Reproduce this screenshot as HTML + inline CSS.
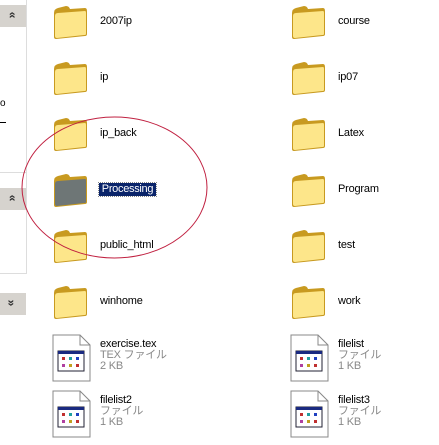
<html><head><style>
body{margin:0;width:439px;height:445px;background:#fff;position:relative;overflow:hidden;font-family:"Liberation Sans","Noto Sans CJK JP",sans-serif;font-size:10px;color:#000}
.a{position:absolute}
.btn{position:absolute;left:0;width:26px;height:22px;background:#d6d3ce}
.btn span{position:absolute;left:8px;top:4px;font-size:12px;line-height:12px;color:#333;font-weight:bold;display:block}
.lbl{position:absolute;font-size:11px;letter-spacing:-0.2px}
.g{color:#888}
</style></head><body>
<div class="a" style="left:0;top:0;width:26px;height:172px;border-right:1px solid #ddd;border-bottom:1px solid #ddd"></div>
<div class="a" style="left:0;top:173px;width:26px;height:100px;border-right:1px solid #ddd;border-bottom:1px solid #ddd"></div>
<div class="btn" style="top:5px"><span style="transform:rotate(-90deg)">»</span></div>
<div class="btn" style="top:188px"><span style="transform:rotate(-90deg)">»</span></div>
<div class="btn" style="top:293px"><span style="transform:rotate(90deg)">»</span></div>
<div class="a" style="left:0;top:98px;font-size:10px">o</div>
<div class="a" style="left:0;top:122px;width:6px;height:1px;background:#000"></div>
<svg width="0" height="0" style="position:absolute"><defs>
<symbol id="f" viewBox="0 0 36 36"><path d="M2 8 Q2 4 6 3 L14 1 Q17 1 18 4 L33 3 Q35 3 35 6 L35 29 Q35 31 33 31 L4 34 Q2 34 2 32 Z" fill="#c89a20"/><path d="M3 11 Q3 8 6 8 L33 6 Q34 6 34 8 L34 29 Q34 30 32 30 L5 33 Q3 33 3 31 Z" fill="currentColor"/></symbol>
<symbol id="d" viewBox="0 0 40 48"><path d="M1 1 L28 1 L38 11 L38 47 L1 47 Z" fill="#fff" stroke="#888"/><path d="M28 1 L28 11 L38 11" fill="none" stroke="#888"/><rect x="6" y="17" width="26" height="20" fill="#fff" stroke="#223"/><rect x="6" y="17" width="26" height="3" fill="#1a2a80"/><g fill="#c03030"><rect x="10" y="23" width="3" height="3"/><rect x="10" y="30" width="3" height="3" fill="#b040a0"/><rect x="17" y="23" width="3" height="3" fill="#20a0a0"/><rect x="17" y="30" width="3" height="3" fill="#c0a020"/><rect x="24" y="23" width="3" height="3" fill="#2040c0"/><rect x="24" y="30" width="3" height="3"/></g></symbol>
</defs></svg>
<svg class="a" style="left:52px;top:5px;color:#fde68a" width="36" height="36"><use href="#f"/></svg>
<svg class="a" style="left:52px;top:61px;color:#fde68a" width="36" height="36"><use href="#f"/></svg>
<svg class="a" style="left:52px;top:117px;color:#fde68a" width="36" height="36"><use href="#f"/></svg>
<svg class="a" style="left:52px;top:173px;color:#6e7676" width="36" height="36"><use href="#f"/></svg>
<svg class="a" style="left:52px;top:229px;color:#fde68a" width="36" height="36"><use href="#f"/></svg>
<svg class="a" style="left:52px;top:285px;color:#fde68a" width="36" height="36"><use href="#f"/></svg>
<svg class="a" style="left:52px;top:334px" width="40" height="48"><use href="#d"/></svg>
<svg class="a" style="left:52px;top:390px" width="40" height="48"><use href="#d"/></svg>
<div class="lbl" style="left:100px;top:15px">2007ip</div>
<div class="lbl" style="left:100px;top:71px">ip</div>
<div class="lbl" style="left:100px;top:127px">ip_back</div>
<div class="a" style="left:99px;top:183px;width:57px;height:13px;background:#0a246a;color:#fff;font-size:11px;line-height:13px;outline:1px dotted #888;text-align:center;letter-spacing:-0.3px">Processing</div>
<div class="lbl" style="left:100px;top:239px">public_html</div>
<div class="lbl" style="left:100px;top:295px">winhome</div>
<div class="lbl" style="left:100px;top:339px;line-height:11px">exercise.tex<br><span class="g">TEX ファイル<br>2 KB</span></div>
<div class="lbl" style="left:100px;top:395px;line-height:11px">filelist2<br><span class="g">ファイル<br>1 KB</span></div>
<svg class="a" style="left:290px;top:5px;color:#fde68a" width="36" height="36"><use href="#f"/></svg>
<svg class="a" style="left:290px;top:61px;color:#fde68a" width="36" height="36"><use href="#f"/></svg>
<svg class="a" style="left:290px;top:117px;color:#fde68a" width="36" height="36"><use href="#f"/></svg>
<svg class="a" style="left:290px;top:173px;color:#fde68a" width="36" height="36"><use href="#f"/></svg>
<svg class="a" style="left:290px;top:229px;color:#fde68a" width="36" height="36"><use href="#f"/></svg>
<svg class="a" style="left:290px;top:285px;color:#fde68a" width="36" height="36"><use href="#f"/></svg>
<svg class="a" style="left:290px;top:334px" width="40" height="48"><use href="#d"/></svg>
<svg class="a" style="left:290px;top:390px" width="40" height="48"><use href="#d"/></svg>
<div class="lbl" style="left:338px;top:15px">course</div>
<div class="lbl" style="left:338px;top:71px">ip07</div>
<div class="lbl" style="left:338px;top:127px">Latex</div>
<div class="lbl" style="left:338px;top:183px">Program</div>
<div class="lbl" style="left:338px;top:239px">test</div>
<div class="lbl" style="left:338px;top:295px">work</div>
<div class="lbl" style="left:338px;top:339px;line-height:11px">filelist<br><span class="g">ファイル<br>1 KB</span></div>
<div class="lbl" style="left:338px;top:395px;line-height:11px">filelist3<br><span class="g">ファイル<br>1 KB</span></div>
<svg class="a" style="left:0;top:0" width="439" height="445"><ellipse cx="114.5" cy="187.5" rx="92.5" ry="70.5" fill="none" stroke="#c02040" stroke-width="1"/></svg>
</body></html>
